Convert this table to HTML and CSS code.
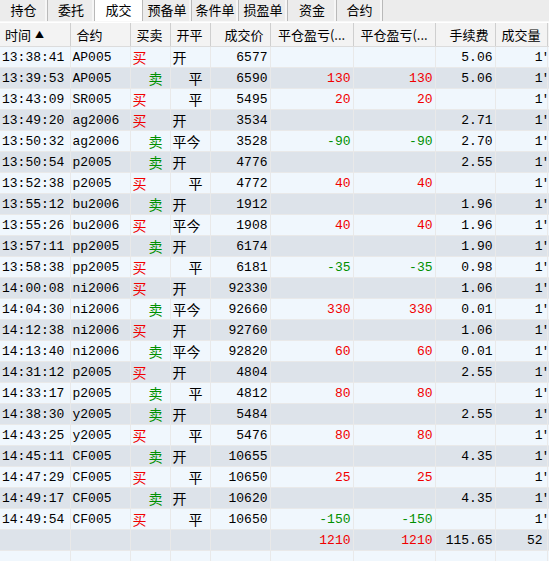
FILE: index.html
```html
<!DOCTYPE html>
<html>
<head>
<meta charset="utf-8">
<link rel="stylesheet" href="styles.css">
</head>
<body>
<div class="app">
  <div class="tabs">
    <div class="tab w48">持仓</div>
    <div class="tab w47">委托</div>
    <div class="tab active w48">成交</div>
    <div class="tab w49">预备单</div>
    <div class="tab w47">条件单</div>
    <div class="tab w49">损盈单</div>
    <div class="tab w49">资金</div>
    <div class="tab w46">合约</div>
  </div>
  <div class="gridwrap">
  <table class="grid">
    <colgroup>
      <col class="c1"><col class="c2"><col class="c3"><col class="c4"><col class="c5"><col class="c6"><col class="c7"><col class="c8"><col class="c9"><col class="c10">
    </colgroup>
    <thead>
      <tr>
        <th class="hl">时间 <span class="sort">▲</span></th>
        <th class="hl pl6">合约</th>
        <th class="hl pl6">买卖</th>
        <th class="hl pl6">开平</th>
        <th class="hr">成交价</th>
        <th class="hc">平仓盈亏(...</th>
        <th class="hc">平仓盈亏(...</th>
        <th class="hr">手续费</th>
        <th class="hc">成交量</th>
        <th></th>
      </tr>
    </thead>
    <tbody>
      <tr><td>13:38:41</td><td>AP005</td><td class="buy">买</td><td class="kp">开</td><td class="num">6577</td><td></td><td></td><td class="num">5.06</td><td class="num vol">1</td><td class="cut">'</td></tr>
      <tr><td>13:39:53</td><td>AP005</td><td class="sell">卖</td><td class="kp ping">平</td><td class="num">6590</td><td class="num red">130</td><td class="num red">130</td><td class="num">5.06</td><td class="num vol">1</td><td class="cut">'</td></tr>
      <tr><td>13:43:09</td><td>SR005</td><td class="buy">买</td><td class="kp ping">平</td><td class="num">5495</td><td class="num red">20</td><td class="num red">20</td><td></td><td class="num vol">1</td><td class="cut">'</td></tr>
      <tr><td>13:49:20</td><td>ag2006</td><td class="buy">买</td><td class="kp">开</td><td class="num">3534</td><td></td><td></td><td class="num">2.71</td><td class="num vol">1</td><td class="cut">'</td></tr>
      <tr><td>13:50:32</td><td>ag2006</td><td class="sell">卖</td><td class="kp">平今</td><td class="num">3528</td><td class="num green">-90</td><td class="num green">-90</td><td class="num">2.70</td><td class="num vol">1</td><td class="cut">'</td></tr>
      <tr><td>13:50:54</td><td>p2005</td><td class="sell">卖</td><td class="kp">开</td><td class="num">4776</td><td></td><td></td><td class="num">2.55</td><td class="num vol">1</td><td class="cut">'</td></tr>
      <tr><td>13:52:38</td><td>p2005</td><td class="buy">买</td><td class="kp ping">平</td><td class="num">4772</td><td class="num red">40</td><td class="num red">40</td><td></td><td class="num vol">1</td><td class="cut">'</td></tr>
      <tr><td>13:55:12</td><td>bu2006</td><td class="sell">卖</td><td class="kp">开</td><td class="num">1912</td><td></td><td></td><td class="num">1.96</td><td class="num vol">1</td><td class="cut">'</td></tr>
      <tr><td>13:55:26</td><td>bu2006</td><td class="buy">买</td><td class="kp">平今</td><td class="num">1908</td><td class="num red">40</td><td class="num red">40</td><td class="num">1.96</td><td class="num vol">1</td><td class="cut">'</td></tr>
      <tr><td>13:57:11</td><td>pp2005</td><td class="sell">卖</td><td class="kp">开</td><td class="num">6174</td><td></td><td></td><td class="num">1.90</td><td class="num vol">1</td><td class="cut">'</td></tr>
      <tr><td>13:58:38</td><td>pp2005</td><td class="buy">买</td><td class="kp ping">平</td><td class="num">6181</td><td class="num green">-35</td><td class="num green">-35</td><td class="num">0.98</td><td class="num vol">1</td><td class="cut">'</td></tr>
      <tr><td>14:00:08</td><td>ni2006</td><td class="buy">买</td><td class="kp">开</td><td class="num">92330</td><td></td><td></td><td class="num">1.06</td><td class="num vol">1</td><td class="cut">'</td></tr>
      <tr><td>14:04:30</td><td>ni2006</td><td class="sell">卖</td><td class="kp">平今</td><td class="num">92660</td><td class="num red">330</td><td class="num red">330</td><td class="num">0.01</td><td class="num vol">1</td><td class="cut">'</td></tr>
      <tr><td>14:12:38</td><td>ni2006</td><td class="buy">买</td><td class="kp">开</td><td class="num">92760</td><td></td><td></td><td class="num">1.06</td><td class="num vol">1</td><td class="cut">'</td></tr>
      <tr><td>14:13:40</td><td>ni2006</td><td class="sell">卖</td><td class="kp">平今</td><td class="num">92820</td><td class="num red">60</td><td class="num red">60</td><td class="num">0.01</td><td class="num vol">1</td><td class="cut">'</td></tr>
      <tr><td>14:31:12</td><td>p2005</td><td class="buy">买</td><td class="kp">开</td><td class="num">4804</td><td></td><td></td><td class="num">2.55</td><td class="num vol">1</td><td class="cut">'</td></tr>
      <tr><td>14:33:17</td><td>p2005</td><td class="sell">卖</td><td class="kp ping">平</td><td class="num">4812</td><td class="num red">80</td><td class="num red">80</td><td></td><td class="num vol">1</td><td class="cut">'</td></tr>
      <tr><td>14:38:30</td><td>y2005</td><td class="sell">卖</td><td class="kp">开</td><td class="num">5484</td><td></td><td></td><td class="num">2.55</td><td class="num vol">1</td><td class="cut">'</td></tr>
      <tr><td>14:43:25</td><td>y2005</td><td class="buy">买</td><td class="kp ping">平</td><td class="num">5476</td><td class="num red">80</td><td class="num red">80</td><td></td><td class="num vol">1</td><td class="cut">'</td></tr>
      <tr><td>14:45:11</td><td>CF005</td><td class="sell">卖</td><td class="kp">开</td><td class="num">10655</td><td></td><td></td><td class="num">4.35</td><td class="num vol">1</td><td class="cut">'</td></tr>
      <tr><td>14:47:29</td><td>CF005</td><td class="buy">买</td><td class="kp ping">平</td><td class="num">10650</td><td class="num red">25</td><td class="num red">25</td><td></td><td class="num vol">1</td><td class="cut">'</td></tr>
      <tr><td>14:49:17</td><td>CF005</td><td class="sell">卖</td><td class="kp">开</td><td class="num">10620</td><td></td><td></td><td class="num">4.35</td><td class="num vol">1</td><td class="cut">'</td></tr>
      <tr><td>14:49:54</td><td>CF005</td><td class="buy">买</td><td class="kp ping">平</td><td class="num">10650</td><td class="num green">-150</td><td class="num green">-150</td><td></td><td class="num vol">1</td><td class="cut">'</td></tr>
      <tr><td></td><td></td><td></td><td></td><td></td><td class="num red">1210</td><td class="num red">1210</td><td class="num">115.65</td><td class="num vol">52</td><td></td></tr>
      <tr><td></td><td></td><td></td><td></td><td></td><td></td><td></td><td></td><td></td><td></td></tr>
    </tbody>
  </table>
  </div>
</div>
</body>
</html>
```
FILE: styles.css
```css
html, body {
  margin: 0;
  padding: 0;
  background: #ffffff;
}
.app {
  width: 549px;
  height: 561px;
  overflow: hidden;
  background: #ffffff;
}
.tabs {
  display: flex;
  height: 21px;
  background: #ececec;
  border-bottom: 1px solid #f8f8f8;
  font-family: "Noto Sans CJK SC", sans-serif;
  font-size: 13px;
  color: #000;
}
.tab {
  box-sizing: border-box;
  height: 21px;
  line-height: 20px;
  text-align: center;
  border-right: 1px solid #b9b9b9;
  box-shadow: inset -2px 0 0 #f6f6f6;
}
.tab.active {
  background: #ffffff;
  box-shadow: none;
}
.w46 { width: 46px; }
.w47 { width: 47px; }
.w48 { width: 48px; }
.w49 { width: 49px; }
.gridwrap {
  margin-top: 1px;
  width: 549px;
  overflow: hidden;
}
.grid {
  table-layout: fixed;
  border-collapse: collapse;
  width: 567px;
}
.c1 { width: 70px; }
.c2 { width: 60px; }
.c3 { width: 40px; }
.c4 { width: 40px; }
.c5 { width: 60px; }
.c6 { width: 83px; }
.c7 { width: 82px; }
.c8 { width: 60px; }
.c9 { width: 52px; }
.c10 { width: 20px; }
thead th {
  height: 23px;
  padding: 0;
  background: #f3f3f3;
  border-right: 1px solid #cfcfcf;
  border-bottom: 1px solid #dcdcdc;
  font-family: "Noto Sans CJK SC", sans-serif;
  font-size: 13px;
  font-weight: normal;
  color: #000;
  white-space: nowrap;
  overflow: hidden;
}
.hl { text-align: left; padding-left: 5px; }
.pl6 { padding-left: 6px; }
.hr { text-align: right; padding-right: 6px; }
.hc { text-align: center; }
.sort { font-size: 9px; vertical-align: 2px; margin-left: 1px; }
tbody td {
  height: 20px;
  padding: 0 0 0 2px;
  border-right: 1px solid #e9e9e9;
  border-bottom: 1px solid #e9e9e9;
  font-family: "Liberation Mono", monospace;
  font-size: 13px;
  color: #000;
  white-space: nowrap;
  overflow: hidden;
}
tbody tr:nth-child(odd) td { background: #f0f7fd; }
tbody tr:nth-child(even) td { background: #dde3ea; }
tbody td.num { text-align: right; padding: 0 2px 0 0; }
tbody td.vol { padding-right: 4px; }
tbody td.buy, tbody td.sell, tbody td.kp {
  font-family: "Noto Sans CJK SC", sans-serif;
  font-size: 14px;
  line-height: 20px;
}
tbody td.buy { color: #f00000; }
tbody td.sell { color: #009000; padding-left: 18px; }
tbody td.ping { padding-left: 18px; }
.red { color: #f00000 !important; }
.green { color: #009000 !important; }
tbody td.cut { padding-left: 0; overflow: visible; text-indent: -6px; }
```
